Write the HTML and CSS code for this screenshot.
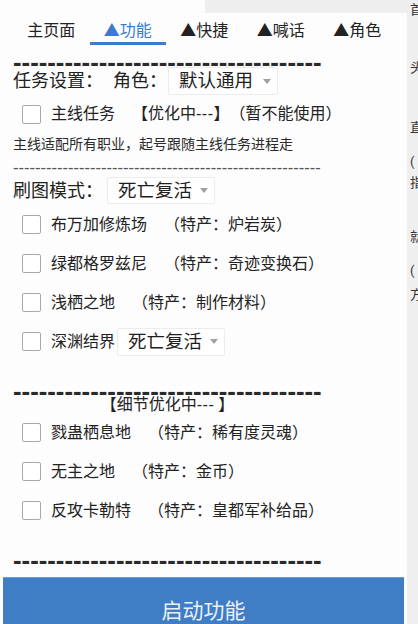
FILE: index.html
```html
<!DOCTYPE html>
<html lang="zh">
<head>
<meta charset="utf-8">
<title>功能</title>
<link rel="stylesheet" href="styles.css">
</head>
<body>
<div class="page">
  <div class="main">
    <div class="topbar"><div class="ghost"></div></div>
    <nav class="tabs">
      <div class="tab">主页面</div>
      <div class="tab active">▲功能</div>
      <div class="tab">▲快捷</div>
      <div class="tab">▲喊话</div>
      <div class="tab">▲角色</div>
    </nav>
    <div class="content">
      <div class="dashes thick d1">------------------------------------</div>
      <div class="row setting">
        <span class="label">任务设置：</span>
        <span class="label role">角色：</span>
        <div class="select sel-role">默认通用<span class="arrow"></span></div>
      </div>
      <div class="check-row first"><span class="box"></span><span class="name">主线任务<span class="spec">【优化中<span class="lat">---</span>】</span><span class="spec2">（暂不能使用）</span></span></div>
      <p class="desc">主线适配所有职业，起号跟随主线任务进程走</p>
      <div class="dashes thin">--------------------------------------------------------</div>
      <div class="row mode">
        <span class="label">刷图模式：</span>
        <div class="select sel-mode">死亡复活<span class="arrow"></span></div>
      </div>
      <div class="check-row"><span class="box"></span><span class="name">布万加修炼场<span class="spec">（特产：炉岩炭）</span></span></div>
      <div class="check-row"><span class="box"></span><span class="name">绿都格罗兹尼<span class="spec">（特产：奇迹变换石）</span></span></div>
      <div class="check-row"><span class="box"></span><span class="name">浅栖之地<span class="spec">（特产：制作材料）</span></span></div>
      <div class="check-row"><span class="box"></span><span class="name">深渊结界</span><div class="select sel-abyss">死亡复活<span class="arrow"></span></div></div>
      <div class="dashes thick d2">------------------------------------</div>
      <div class="note">【细节优化中<span class="lat">---</span> 】</div>
      <div class="check-row"><span class="box"></span><span class="name">戮蛊栖息地<span class="spec">（特产：稀有度灵魂）</span></span></div>
      <div class="check-row"><span class="box"></span><span class="name">无主之地<span class="spec">（特产：金币）</span></span></div>
      <div class="check-row"><span class="box"></span><span class="name">反攻卡勒特<span class="spec">（特产：皇都军补给品）</span></span></div>
      <div class="dashes thick d3">------------------------------------</div>
    </div>
    <button class="start">启动功能</button>
  </div>
  <div class="side">
    <span class="sc s1">首</span>
    <span class="sc s2">头</span>
    <span class="sc s3">直</span>
    <span class="sc s4">(</span>
    <span class="sc s5">指</span>
    <span class="sc s6">就</span>
    <span class="sc s7">(</span>
    <span class="sc s8">方</span>
  </div>
</div>
</body>
</html>
```

FILE: styles.css
```css
* { box-sizing: border-box; }
html, body { margin: 0; padding: 0; }
body {
  font-family: "Roboto", "Noto Sans CJK SC", sans-serif;
  color: #222;
  background: #fdfdfd;
}
.page {
  display: flex;
  width: 418px;
  height: 624px;
  overflow: hidden;
}
.main {
  width: 407px;
  flex: none;
  background: #fdfdfd;
  display: flex;
  flex-direction: column;
}
.main > *, .content > * { flex-shrink: 0; }
.topbar {
  height: 13px;
  display: flex;
}
.ghost {
  margin-left: 205px;
  flex: 1;
  background: #eeeeee;
}
.tabs {
  display: flex;
  padding-left: 13px;
  height: 32px;
}
.tab {
  width: 76.5px;
  text-align: center;
  font-size: 16px;
  line-height: 22px;
  padding-top: 7px;
  border-bottom: 3px solid transparent;
  color: #222;
}
.tab.active {
  color: #3b7ad2;
  border-bottom-color: #3b7ad2;
}
.content {
  padding-left: 13px;
  display: flex;
  flex-direction: column;
}
.dashes {
  white-space: nowrap;
  width: 312px;
  font-family: "Liberation Sans", sans-serif;
}
.dashes.thick {
  font-weight: bold;
  font-size: 25.75px;
  height: 6px;
  line-height: 6px;
  color: #2a2a2a;
}
.d1 { margin-top: 14px; margin-bottom: 2px; }
.d2 { margin-top: 27px; margin-bottom: 3px; }
.d3 { margin-top: 27px; }
.dashes.thin {
  font-size: 16.5px;
  height: 21px;
  padding-top: 4px;
  line-height: 17px;
  color: #555;
}
.lat {
  font-family: "Liberation Sans", sans-serif;
  letter-spacing: 0.5px;
}
.row {
  display: flex;
  align-items: center;
}
.setting { height: 28px; }
.mode { height: 29px; }
.label {
  font-size: 18px;
  line-height: 24px;
}
.role { margin-left: 10px; }
.select {
  display: flex;
  align-items: center;
  height: 28px;
  padding-left: 10px;
  font-size: 18.5px;
  line-height: 24px;
  background: #fff;
  border: 1px solid #ececec;
  border-radius: 2px;
  color: #1e1e1e;
}
.sel-role { margin-left: 1px; width: 110px; }
.sel-mode { margin-left: 4px; width: 108px; height: 27px; }
.sel-abyss { margin-left: 2px; width: 108px; height: 28px; }
.arrow {
  margin-left: auto;
  margin-right: 6px;
  width: 0;
  height: 0;
  border-left: 4px solid transparent;
  border-right: 4px solid transparent;
  border-top: 5px solid #a0a0a0;
}
.check-row {
  display: flex;
  align-items: center;
  height: 39px;
  padding-left: 9px;
}
.check-row.first { height: 38px; }
.box {
  width: 19px;
  height: 19px;
  border: 1px solid #a8a8a8;
  border-radius: 2px;
  background: #fff;
  margin-right: 10px;
  flex: none;
}
.name {
  font-size: 16px;
  line-height: 22px;
  white-space: nowrap;
}
.spec { margin-left: 17px; }
.spec2 { margin-left: 8px; }
.desc {
  margin: 0;
  height: 22px;
  font-size: 14px;
  line-height: 22px;
  color: #2a2a2a;
}
.note {
  width: 309px;
  text-align: center;
  font-size: 16px;
  height: 16px;
  line-height: 16px;
}
.start {
  margin: 14px 0 0 3px;
  width: 401px;
  height: 62px;
  border: none;
  border-top: 1px solid #6a9ad3;
  background: #3f7dc5;
  color: #eaf1fa;
  font-family: "Roboto", "Noto Sans CJK SC", sans-serif;
  font-size: 21px;
  padding: 0;
}
.side {
  width: 11px;
  flex: none;
  background: #efefef;
  overflow: hidden;
  display: flex;
  flex-direction: column;
  padding-left: 3px;
}
.side > * { flex-shrink: 0; }
.sc {
  font-size: 13px;
  line-height: 14px;
  height: 14px;
  white-space: nowrap;
  color: #333;
}
.s1 { margin-top: 3px; }
.s2 { margin-top: 44px; }
.s3 { margin-top: 46px; }
.s4 { margin-top: 20px; }
.s5 { margin-top: 7px; }
.s6 { margin-top: 40px; }
.s7 { margin-top: 20px; }
.s8 { margin-top: 10px; }
```
